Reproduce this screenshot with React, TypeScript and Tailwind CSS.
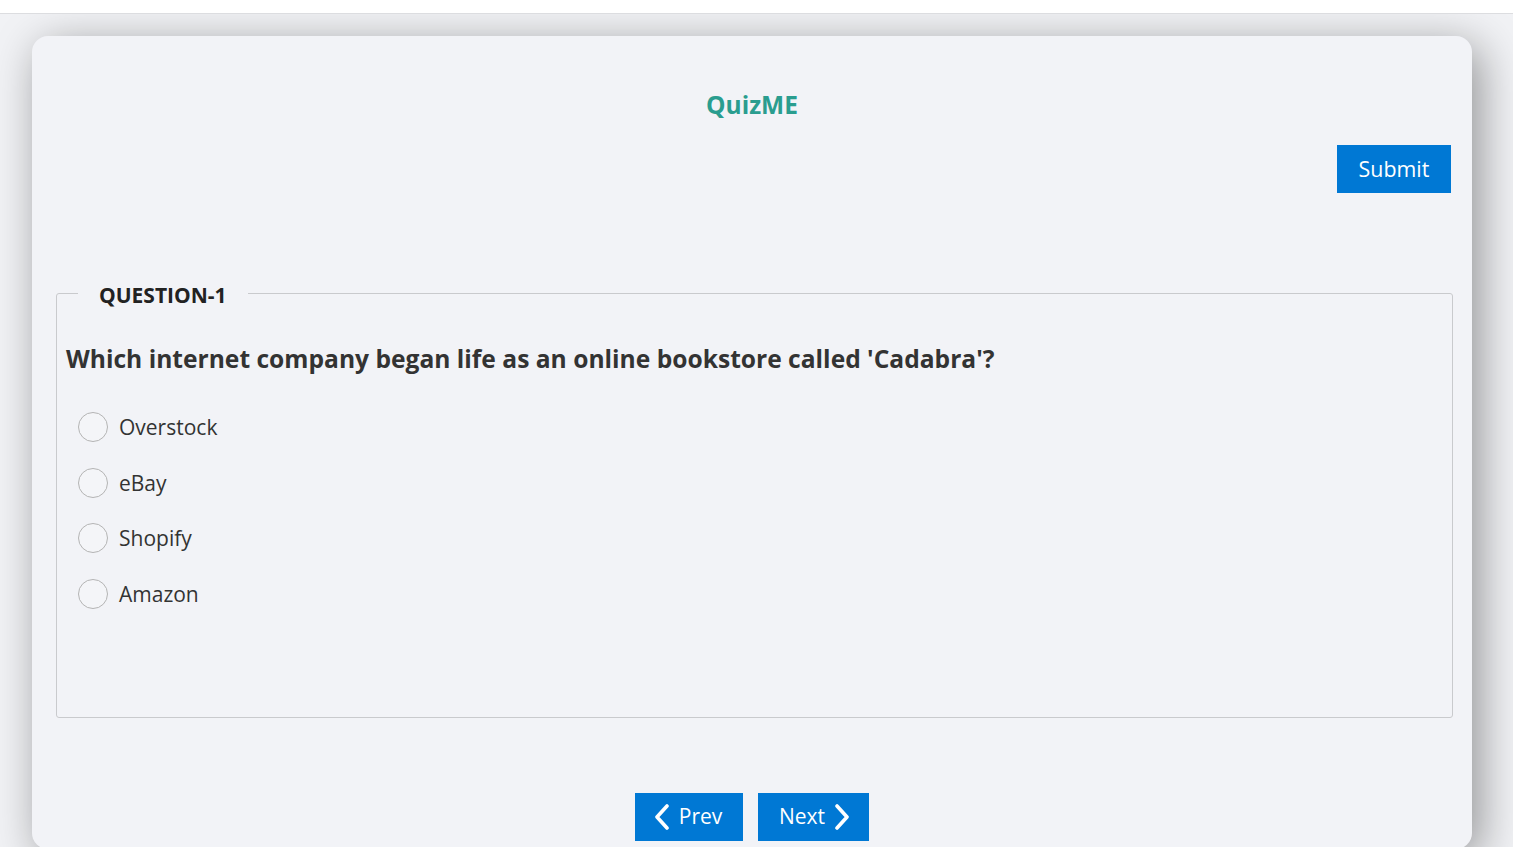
import { useState } from "react";

const options = ["Overstock", "eBay", "Shopify", "Amazon"];

function Chevron({ dir }: { dir: "left" | "right" }) {
  return (
    <svg width="16" height="26" viewBox="0 0 16 26" fill="none">
      <polyline
        points={dir === "left" ? "13,2 3,13 13,24" : "3,2 13,13 3,24"}
        stroke="white"
        strokeWidth="3.6"
        strokeLinecap="round"
        strokeLinejoin="round"
      />
    </svg>
  );
}

export default function App() {
  const [picked, setPicked] = useState<string | null>(null);

  return (
    <div
      className="flex h-screen flex-col overflow-hidden bg-[#f1f2f5] text-[#333]"
      style={{ fontFamily: '"Open Sans", sans-serif' }}
    >
      <div className="relative z-10 h-[14px] shrink-0 border-b border-[#dcdde0] bg-white" />

      <div className="flex-1 overflow-hidden pt-[22px] pl-8 pr-[41px]">
        <div className="rounded-2xl bg-[#f2f3f7] pt-[52px] pb-[8px] shadow-[8px_10px_45px_rgba(0,0,0,0.4)]">
          <h1 className="text-center text-[24.5px] font-bold leading-[33px] text-[#2a9d8f]">
            QuizME
          </h1>

          <div className="mt-[24px] flex justify-end pr-[21px]">
            <button className="h-[48px] w-[114px] bg-[#0078d4] text-[21.4px] text-white">
              Submit
            </button>
          </div>

          <fieldset className="mt-[86px] ml-6 mr-[19px] h-[439px] rounded-[3px] border border-[#c9cacd] px-[9px]">
            <legend className="ml-[12px] px-[21px] text-[21px] font-bold leading-[28px] text-[#222]">
              <span className="relative top-[2px]">QUESTION-1</span>
            </legend>

            <p className="mt-[35px] text-[24.6px] font-bold leading-[33px] text-[#333]">
              Which internet company began life as an online bookstore called 'Cadabra'?
            </p>

            <div className="mt-[37px] flex flex-col gap-[25.5px] pl-[12px]">
              {options.map((o) => (
                <label key={o} className="flex h-[30px] cursor-pointer items-center gap-[11px]">
                  <span
                    onClick={() => setPicked(o)}
                    className="flex h-[30px] w-[30px] items-center justify-center rounded-full border border-[#b4b4b4] bg-[#f4f5f8]"
                  >
                    {picked === o && <span className="h-[14px] w-[14px] rounded-full bg-[#0078d4]" />}
                  </span>
                  <span className="text-[21px] leading-[30px] text-[#333]">{o}</span>
                </label>
              ))}
            </div>
          </fieldset>

          <div className="mt-[75px] flex justify-center gap-[15px]">
            <button className="flex h-[48px] w-[108px] items-center justify-center gap-[9px] bg-[#0078d4] pr-[2px] text-[21px] text-white">
              <Chevron dir="left" />
              <span>Prev</span>
            </button>
            <button className="flex h-[48px] w-[111px] items-center justify-center gap-[9px] bg-[#0078d4] pl-[2px] text-[21px] text-white">
              <span>Next</span>
              <Chevron dir="right" />
            </button>
          </div>
        </div>
      </div>
    </div>
  );
}
